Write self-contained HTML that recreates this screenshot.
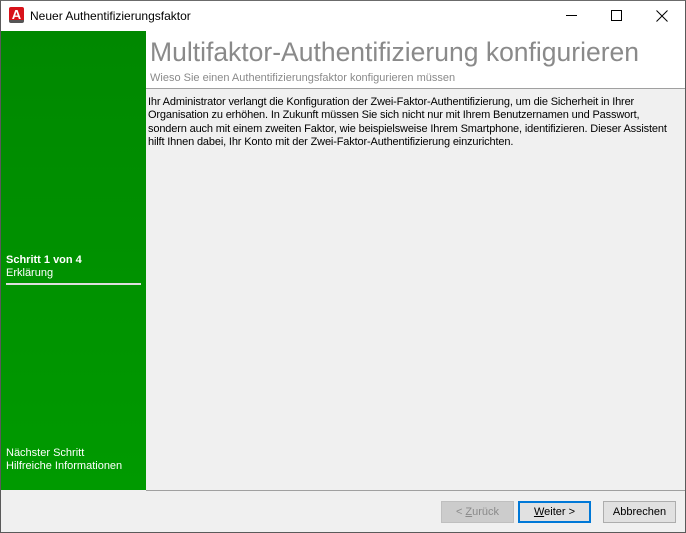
<!DOCTYPE html>
<html><head><meta charset="utf-8"><style>
*{margin:0;padding:0;box-sizing:border-box}
body{width:686px;height:533px;background:#f0f0f0;font-family:"Liberation Sans",sans-serif;position:relative;overflow:hidden;font-size:11px}
.win{position:absolute;left:0;top:0;width:686px;height:533px;border:1px solid #5a5a5a;border-top:1px solid #6b6b6b}
.title{position:absolute;left:1px;top:1px;width:684px;height:30px;background:#fff}
.title .t{position:absolute;left:29px;top:8px;font-size:12px;color:#000}
.logo{position:absolute;left:8px;top:6px;width:15px;height:16px;background:#d8121a;border-radius:2px;color:#fff;font-weight:bold;font-size:13px;text-align:center;line-height:15px;border-bottom:3px solid #555}
.green{position:absolute;left:1px;top:31px;width:145px;height:459px;background:linear-gradient(#008800,#009a00)}
.hdr{position:absolute;left:146px;top:31px;width:539px;height:58px;background:#fff;border-bottom:1px solid #a0a0a0}
.h1{position:absolute;left:4px;top:6px;font-size:26.5px;color:#8a8a8a;letter-spacing:0;white-space:nowrap}
.h2{position:absolute;left:4px;top:41px;font-size:11px;color:#8a8a8a}
.body{position:absolute;left:148px;top:96px;width:540px;font-size:11px;line-height:13.3px;color:#000;letter-spacing:-0.15px}
.step{position:absolute;left:6px;color:#fff;font-size:11px;line-height:13px}
.bar{position:absolute;left:6px;top:283px;width:135px;height:2px;background:#ddd}
.sep{position:absolute;left:146px;top:490px;width:539px;height:1px;background:#a0a0a0}
.btn{position:absolute;top:501px;height:22px;width:73px;background:#e1e1e1;border:1px solid #adadad;text-align:center;line-height:21px;font-size:11px;color:#000}
</style></head><body>
<div class="win"></div>
<div class="title"><div class="logo">A</div><div class="t">Neuer Authentifizierungsfaktor</div>
<div style="position:absolute;left:565px;top:14px;width:11px;height:1px;background:#000"></div>
<div style="position:absolute;left:610px;top:9px;width:11px;height:11px;border:1px solid #000"></div>
<svg style="position:absolute;left:655px;top:9px" width="12" height="12"><path d="M0.5 0.5L11.5 11.5M11.5 0.5L0.5 11.5" stroke="#000" stroke-width="1"/></svg></div>
<div class="green"></div>
<div class="hdr"><div class="h1">Multifaktor-Authentifizierung konfigurieren</div><div class="h2">Wieso Sie einen Authentifizierungsfaktor konfigurieren müssen</div></div>
<div class="body">Ihr Administrator verlangt die Konfiguration der Zwei-Faktor-Authentifizierung, um die Sicherheit in Ihrer<br>Organisation zu erhöhen. In Zukunft müssen Sie sich nicht nur mit Ihrem Benutzernamen und Passwort,<br>sondern auch mit einem zweiten Faktor, wie beispielsweise Ihrem Smartphone, identifizieren. Dieser Assistent<br>hilft Ihnen dabei, Ihr Konto mit der Zwei-Faktor-Authentifizierung einzurichten.</div>
<div class="step" style="top:254px;font-weight:bold">Schritt 1 von 4</div>
<div class="step" style="top:267px">Erklärung</div>
<div class="bar"></div>
<div class="step" style="top:447px">Nächster Schritt</div>
<div class="step" style="top:460px">Hilfreiche Informationen</div>
<div class="sep"></div>
<div class="btn" style="left:441px;background:#cccccc;border-color:#bfbfbf;color:#8a8a8a">&lt; <u>Z</u>urück</div>
<div class="btn" style="left:518px;border:2px solid #0078d7;line-height:19px"><u>W</u>eiter &gt;</div>
<div class="btn" style="left:603px">Abbrechen</div>
</body></html>
